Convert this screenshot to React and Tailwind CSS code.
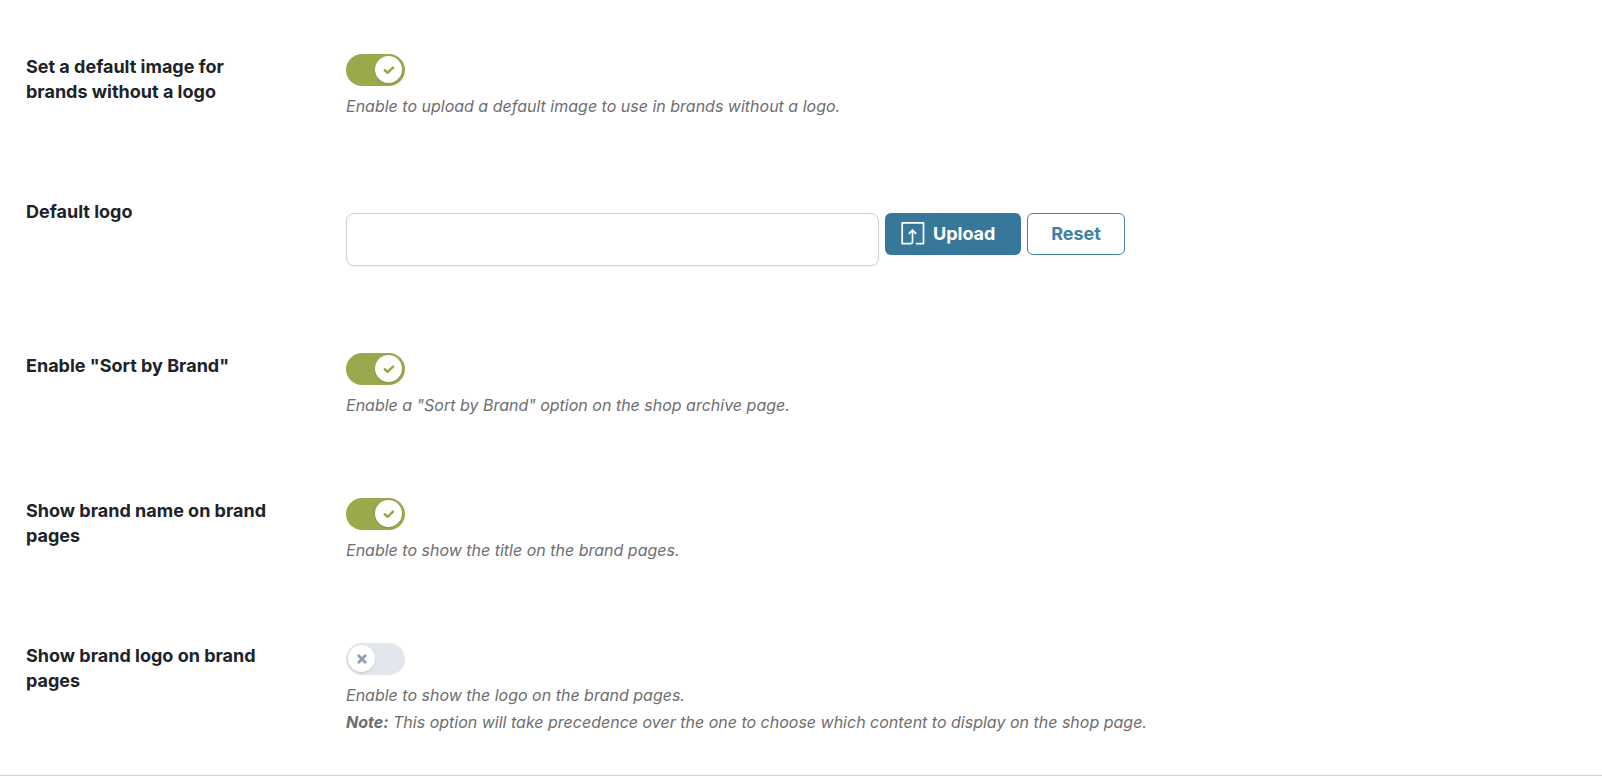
import { useState } from 'react'

const CheckIcon = () => (
  <svg className="h-3 w-3 text-[#94a845]" viewBox="0 0 12 12" fill="none" stroke="currentColor">
    <path strokeLinecap="round" strokeLinejoin="round" strokeWidth={2.5} d="M1.8 6.3 4.6 8.8 10 3.6" />
  </svg>
)

const CrossIcon = () => (
  <svg className="h-3 w-3 text-[#8d9db3]" viewBox="0 0 12 12" fill="none" stroke="currentColor">
    <path strokeLinecap="round" strokeWidth={2.8} d="M2.8 2.8 9.2 9.2M9.2 2.8 2.8 9.2" />
  </svg>
)

const UploadIcon = () => (
  <svg className="h-6 w-6" viewBox="0 0 24 24" fill="none" stroke="currentColor">
    <path
      strokeLinecap="round"
      strokeLinejoin="round"
      strokeWidth={1.7}
      d="M11.500 8v11.500q0 2.200-1.700 2.200H1.200V.9h21.300v20.800H15.500M8.300 11.300 11.500 8 14.700 11.300"
    />
  </svg>
)

function Toggle({ id, defaultChecked }) {
  const [on, setOn] = useState(defaultChecked)

  return (
    <div className="relative h-8 w-[59px]">
      <input
        id={id}
        type="checkbox"
        checked={on}
        onChange={(e) => setOn(e.target.checked)}
        className="block h-8 w-[59px] cursor-pointer appearance-none rounded-full bg-[#e2e7ed] transition-colors checked:bg-[#9aa94b]"
      />
      <span
        className={`pointer-events-none absolute top-[2px] flex h-[27px] w-[27px] items-center justify-center rounded-full bg-white shadow-sm ${
          on ? 'right-[3px]' : 'left-[2px]'
        }`}
      >
        {on ? <CheckIcon /> : <CrossIcon />}
      </span>
    </div>
  )
}

function Row({ id, label, children }) {
  return (
    <div className="flex pt-10">
      <div className="w-[320px] shrink-0 pr-16">
        <label htmlFor={id} className="block text-lg leading-[25px] font-bold text-[#1d2327]">
          {label}
        </label>
      </div>
      <div className="min-w-0 flex-1">{children}</div>
    </div>
  )
}

function ToggleRow({ id, label, defaultChecked = false, children }) {
  return (
    <Row id={id} label={label}>
      <Toggle id={id} defaultChecked={defaultChecked} />
      <p className="mt-[7px] mb-[39px] text-base leading-[27px] text-[#6e6e6e] italic">{children}</p>
    </Row>
  )
}

export default function App() {
  const [logo, setLogo] = useState('')

  return (
    <form className="border-b border-[#d5d5d6] bg-white px-[26px] pt-3.5 font-['Inter','Liberation_Sans',sans-serif]">
      <ToggleRow id="use-default-logo" label="Set a default image for brands without a logo" defaultChecked>
        Enable to upload a default image to use in brands without a logo.
      </ToggleRow>

      <Row id="default-logo" label="Default logo">
        <div className="flex items-start gap-1.5 pt-3.5 pb-[47px]">
          <input
            id="default-logo"
            type="text"
            value={logo}
            onChange={(e) => setLogo(e.target.value)}
            className="h-[53px] w-full max-w-[533px] rounded-lg border border-[#cdd3d9] bg-white px-4 text-base text-[#1d2327] shadow-xs"
          />
          <button
            type="button"
            className="flex h-[42px] w-[136px] shrink-0 items-center gap-2 rounded-md bg-[#36779a] pl-4 text-lg font-bold text-white"
          >
            <UploadIcon />
            Upload
          </button>
          <button
            type="button"
            onClick={() => setLogo('')}
            className="h-[42px] w-[98px] shrink-0 rounded-md border border-[#4584a5] bg-white text-lg font-bold text-[#3c83a6]"
          >
            Reset
          </button>
        </div>
      </Row>

      <ToggleRow id="sort-by-brand" label={'Enable "Sort by Brand"'} defaultChecked>
        Enable a "Sort by Brand" option on the shop archive page.
      </ToggleRow>

      <ToggleRow id="show-name" label="Show brand name on brand pages" defaultChecked>
        Enable to show the title on the brand pages.
      </ToggleRow>

      <ToggleRow id="show-logo" label="Show brand logo on brand pages">
        Enable to show the logo on the brand pages.
        <br />
        <b className="font-bold">Note:</b> This option will take precedence over the one to choose which content to
        display on the shop page.
      </ToggleRow>
    </form>
  )
}
